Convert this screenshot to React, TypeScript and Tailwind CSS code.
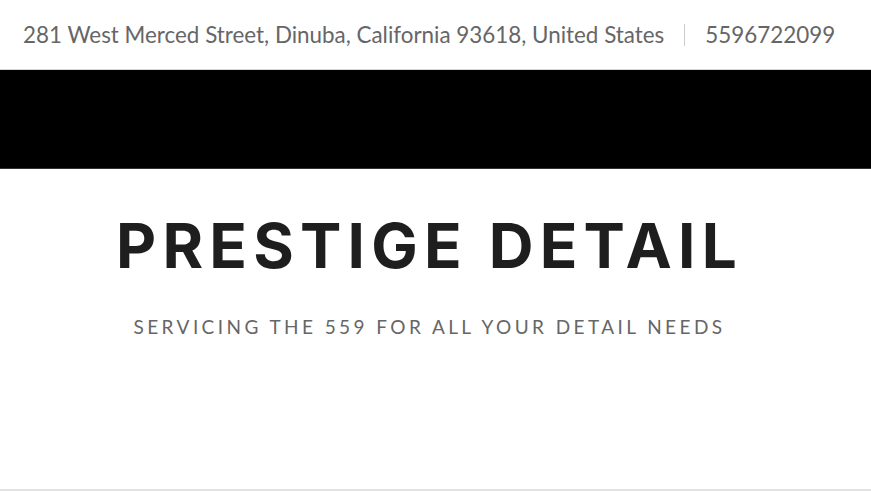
export default function App() {
  return (
    <main className="min-h-screen bg-white flex flex-col">
      {/* Top bar */}
      <header className="h-[70px] flex items-center px-[23px] text-[22.4px] text-[#666] font-['Lato','Liberation_Sans',sans-serif] border-b border-[#d6d6d6]">
        <span>281 West Merced Street, Dinuba, California 93618, United States</span>
        <span className="mx-[20px] h-[22px] w-px bg-[#ccc]" />
        <span>5596722099</span>
      </header>

      {/* Banner */}
      <div className="h-[99px] bg-black border-b border-[#333]" />

      {/* Hero */}
      <section className="h-[322px] flex flex-col items-center text-center border-b-2 border-[#e2e2e2] pr-[12px]">
        <h1 className="mt-[46px] text-[62px] leading-none font-bold tracking-[0.1em] text-[#1e1e1e] font-['Inter','Noto_Sans',sans-serif]">
          PRESTIGE DETAIL
        </h1>
        <p className="mt-[36px] text-[19px] tracking-[0.18em] text-[#666] font-['Lato','Liberation_Sans',sans-serif]">
          SERVICING THE 559 FOR ALL YOUR DETAIL NEEDS
        </p>
      </section>
    </main>
  );
}
